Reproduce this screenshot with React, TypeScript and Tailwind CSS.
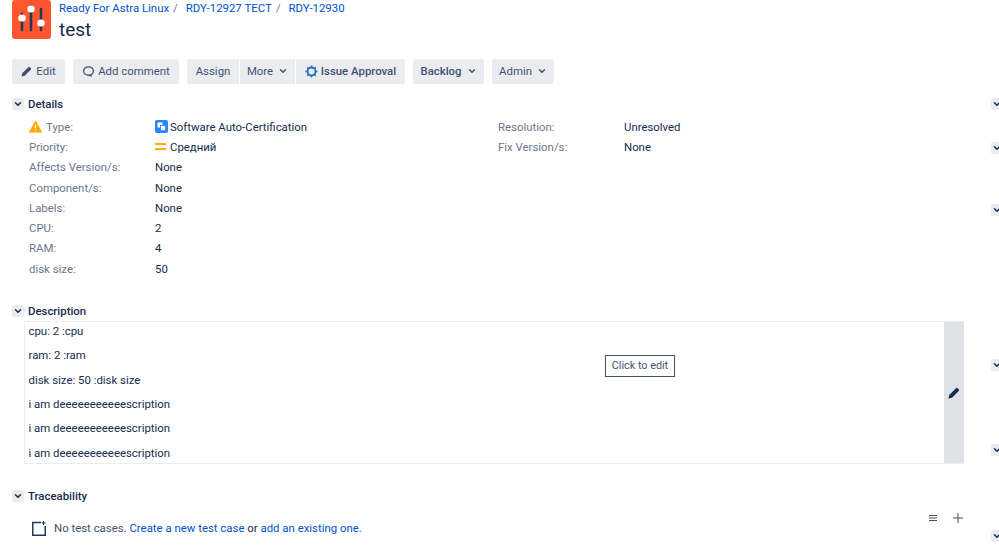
import { ChevronDown, Plus } from 'lucide-react'
import type { ReactNode } from 'react'

function PencilIcon({ color, size = 12 }: { color: string; size?: number }) {
  return (
    <svg width={size} height={size} viewBox="0 0 12 12" fill={color}>
      <path d="M.5 11.500L1.300 8 8 1.300a1.200 1.200 0 0 1 1.700 0l1 1a1.200 1.200 0 0 1 0 1.700L4 10.700z" />
    </svg>
  )
}

function Toggle() {
  return (
    <span className="flex h-[12px] w-[12px] shrink-0 items-center justify-center rounded-[2px] bg-[#ebecf0]">
      <ChevronDown className="h-[10px] w-[10px] text-[#172b4d]" strokeWidth={3.5} />
    </span>
  )
}

function Heading({ title }: { title: string }) {
  return (
    <div className="flex h-[14px] items-center gap-[4px] pl-[12px] font-medium text-[#172b4d]">
      <Toggle />
      <span>{title}</span>
    </div>
  )
}

function Btn({ children, className = '' }: { children: ReactNode; className?: string }) {
  return (
    <div className={`flex h-[25px] items-center justify-center rounded-[3px] bg-[#ebecf0] pb-[1px] text-[#42526e] ${className}`}>
      {children}
    </div>
  )
}

function Row({ label, children, icon }: { label: string; children: ReactNode; icon?: ReactNode }) {
  return (
    <div className="flex h-[20.3px] items-center">
      <div className="flex w-[126px] items-center gap-[4px] text-[#6b778c]">
        {icon}
        <span>{label}</span>
      </div>
      <div className="flex items-center text-[#172b4d]">{children}</div>
    </div>
  )
}

function SideToggle({ mt }: { mt: string }) {
  return (
    <span className={`flex h-[12px] w-[12px] items-center justify-center rounded-[2px] bg-[#ebecf0] ${mt}`}>
      <ChevronDown className="h-[10px] w-[10px] text-[#172b4d]" strokeWidth={3.5} />
    </span>
  )
}

export default function App() {
  return (
    <div className="flex h-[555px] w-[999px] overflow-hidden bg-white font-['Roboto',sans-serif] text-[11.4px] leading-[16px]">
      <main className="w-[991px] shrink-0">
        <header className="flex h-[59px] pl-[12px]">
          <div className="h-[39px] w-[39px] rounded-[3px] bg-[#ff5630]">
            <svg width="39" height="39" viewBox="0 0 39 39">
              <g stroke="#253858" strokeWidth="2.6" strokeLinecap="round">
                <path d="M10 14v16M19 6v24M29 9v21" />
              </g>
              <g fill="#fff">
                <ellipse cx="10" cy="18" rx="3.800" ry="3.500" />
                <ellipse cx="19" cy="9" rx="3.800" ry="3.500" />
                <ellipse cx="29" cy="23" rx="3.800" ry="3.500" />
              </g>
            </svg>
          </div>
          <div className="pl-[8px]">
            <div className="flex h-[16px] items-center text-[#0052cc]">
              <span>Ready For Astra Linux</span>
              <span className="px-[4px] text-[#6b778c]">/</span>
              <span className="pl-[4px]">RDY-12927 ТЕСТ</span>
              <span className="px-[4px] text-[#6b778c]">/</span>
              <span className="pl-[4px]">RDY-12930</span>
            </div>
            <h1 className="pt-[2px] text-[19px] leading-[24px] text-[#172b4d]">test</h1>
          </div>
        </header>

        <div className="flex pl-[12px]">
          <Btn className="w-[53px] gap-[4px]">
            <PencilIcon color="#42526e" size={11} />
            Edit
          </Btn>
          <Btn className="ml-[8px] w-[106px] gap-[3px]">
            <svg width="13" height="13" viewBox="0 0 14 14" fill="none" stroke="#42526e" strokeWidth="1.400">
              <path d="M7 2c3 0 5.200 1.900 5.200 4.500S10 11 7 11c-.5 0-.9 0-1.300-.1l5 .9 M7 2C4 2 1.800 3.900 1.800 6.500S4 11 7 11" />
            </svg>
            Add comment
          </Btn>
          <Btn className="ml-[8px] w-[52px] rounded-r-none">Assign</Btn>
          <Btn className="ml-[1px] w-[55px] gap-[5px] rounded-none">
            More
            <ChevronDown className="h-[10px] w-[10px]" strokeWidth={3.5} />
          </Btn>
          <Btn className="ml-[1px] w-[109px] gap-[3px] rounded-l-none font-medium text-[#2a6ebb]">
            <svg width="13" height="13" viewBox="0 0 14 14" fill="none" stroke="#2a6ebb">
              <circle cx="7" cy="7" r="4.300" strokeWidth="2" />
              <path strokeWidth="1.600" d="M7 0.500v2M7 11.500v2M0.500 7h2M11.500 7h2M2.400 2.400l1.400 1.400M10.200 10.200l1.400 1.400M2.400 11.600l1.400-1.400M10.200 3.800l1.400-1.400" />
            </svg>
            Issue Approval
          </Btn>
          <Btn className="ml-[8px] w-[71px] gap-[5px] bg-[#dfe1e6] font-medium text-[#172b4d]">
            Backlog
            <ChevronDown className="h-[10px] w-[10px]" strokeWidth={3.5} />
          </Btn>
          <Btn className="ml-[8px] w-[62px] gap-[5px]">
            Admin
            <ChevronDown className="h-[10px] w-[10px]" strokeWidth={3.5} />
          </Btn>
        </div>

        <div className="pt-[13px]">
          <Heading title="Details" />
        </div>
        <div className="flex pl-[29px] pt-[5.5px]">
          <div className="w-[469px]">
            <Row
              label="Type:"
              icon={
                <svg width="13" height="13" viewBox="0 0 14 14">
                  <path d="M7 1L13.500 13H0.500z" fill="#ffab00" stroke="#ffab00" strokeLinejoin="round" />
                  <path d="M7 5v4M7 10.500v1" stroke="#fff" strokeWidth="1.400" />
                </svg>
              }
            >
              <svg className="mr-[2px]" width="13" height="13" viewBox="0 0 13 13">
                <rect width="13" height="13" rx="2" fill="#2684ff" />
                <rect x="2.500" y="2.500" width="5" height="5" fill="#fff" />
                <rect x="5.500" y="5.500" width="5" height="5" fill="#fff" stroke="#2684ff" strokeWidth="0.800" />
              </svg>
              Software Auto-Certification
            </Row>
            <Row label="Priority:">
              <span className="mr-[4px] flex w-[11px] flex-col gap-[3px]">
                <span className="h-[2px] bg-[#ffab00]" />
                <span className="h-[2px] bg-[#ffab00]" />
              </span>
              Средний
            </Row>
            <Row label="Affects Version/s:">None</Row>
            <Row label="Component/s:">None</Row>
            <Row label="Labels:">None</Row>
            <Row label="CPU:">2</Row>
            <Row label="RAM:">4</Row>
            <Row label="disk size:">50</Row>
          </div>
          <div>
            <Row label="Resolution:">Unresolved</Row>
            <Row label="Fix Version/s:">None</Row>
          </div>
        </div>

        <div className="pt-[25.5px]">
          <Heading title="Description" />
        </div>
        <div className="relative ml-[24px] mt-[3px] flex h-[143px] w-[940px] border border-r-0 border-[#ebecf0] text-[#172b4d]">
          <div className="-mt-[0.5px] flex-1 pl-[3.5px]">
            {[
              'cpu: 2 :cpu',
              'ram: 2 :ram',
              'disk size: 50 :disk size',
              'i am deeeeeeeeeeescription',
              'i am deeeeeeeeeeescription',
              'i am deeeeeeeeeeescription',
            ].map((line, i) => (
              <p key={i} className="h-[24.4px] leading-[18px]">
                {line}
              </p>
            ))}
          </div>
          <div className="flex w-[20px] items-center justify-center bg-[#dfe1e6]">
            <PencilIcon color="#172b4d" />
          </div>
          <div className="absolute left-[580px] top-[33px] flex h-[22px] w-[70px] items-center justify-center border border-[#42526e] bg-white text-[10.8px] text-[#42526e]">
            Click to edit
          </div>
        </div>

        <div className="pt-[25px]">
          <Heading title="Traceability" />
        </div>
        <div className="flex h-[19px] items-start pl-[32px] pr-[25px]">
          <div className="flex items-center pt-[17px] text-[#42526e]">
            <svg className="mr-[8px]" width="14" height="15" viewBox="0 0 14 15" fill="none" stroke="#253858" strokeWidth="1.500">
              <path d="M9 1.500H.750v12.750h12.500V5" />
              <path d="M11.500 0v4M9.500 2h4" strokeWidth="1.200" />
            </svg>
            <span>No test cases.&nbsp;</span>
            <span className="text-[#0052cc]">Create a new test case</span>
            <span className="text-[#172b4d]">&nbsp;or&nbsp;</span>
            <span className="text-[#0052cc]">add an existing one.</span>
          </div>
          <div className="ml-auto flex items-center gap-[13px] pt-[7px] text-[#42526e]">
            <svg width="8" height="6" viewBox="0 0 8 6" stroke="#42526e">
              <path d="M0 .5h8M0 3h8M0 5.500h8" />
            </svg>
            <Plus className="h-[16px] w-[16px]" strokeWidth={1.5} />
          </div>
        </div>
      </main>

      <aside className="flex flex-col">
        <SideToggle mt="mt-[98px]" />
        <SideToggle mt="mt-[32px]" />
        <SideToggle mt="mt-[50px]" />
        <SideToggle mt="mt-[143px]" />
        <SideToggle mt="mt-[73px]" />
        <SideToggle mt="mt-[74px]" />
      </aside>
    </div>
  )
}
